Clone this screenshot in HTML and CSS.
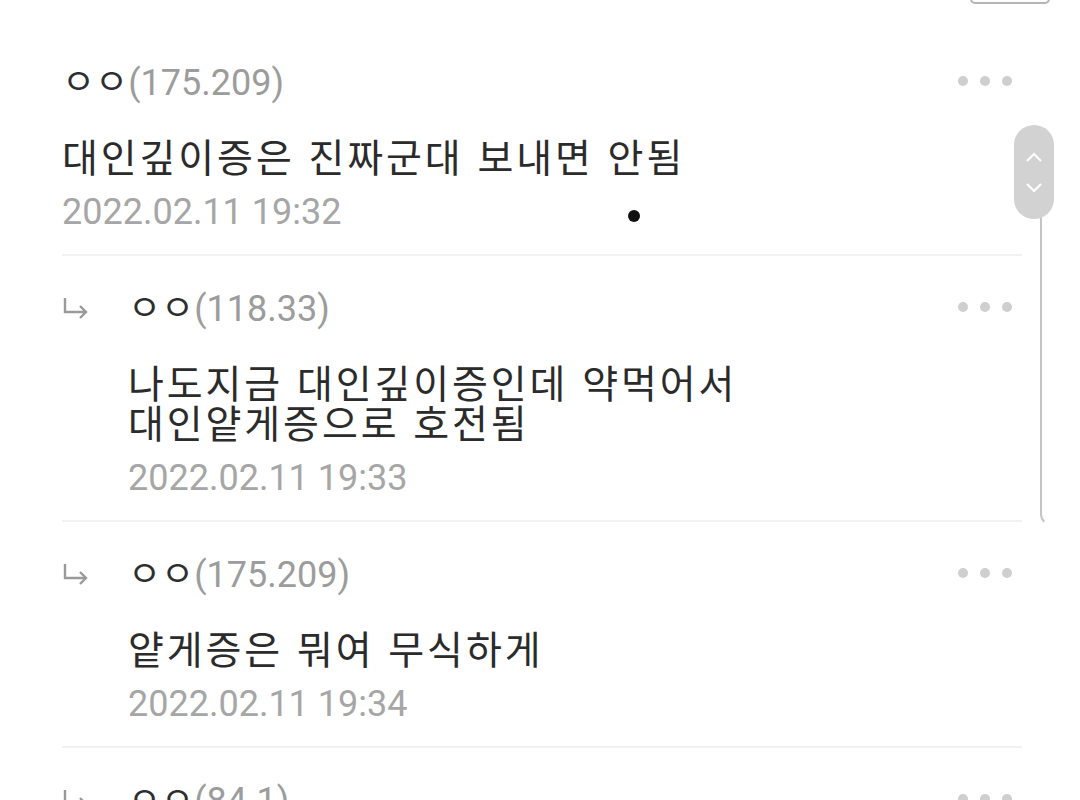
FILE: index.html
```html
<!DOCTYPE html>
<html lang="ko">
  <head>
    <meta charset="UTF-8" />
    <meta name="viewport" content="width=device-width, initial-scale=1.0" />
    <title>댓글</title>
    <link rel="stylesheet" href="styles.css">
  </head>
  <body>
    <div class="top-tab"></div>

    <div class="comment-list">
      <div class="comment">
        <div class="comment-head">
          <span class="nick">ㅇㅇ<span class="ip">(175.209)</span></span>
          <span class="more"><i></i><i></i><i></i></span>
        </div>
        <p class="comment-text">대인깊이증은 진짜군대 보내면 안됨</p>
        <div class="comment-date">2022.02.11 19:32</div>
      </div>

      <div class="comment reply">
        <svg class="reply-arrow" viewBox="0 0 28 22" width="28" height="22">
          <path d="M3 1 V15 H24 M18 9 L24 15 L18 21" fill="none" stroke="#9a9a9a" stroke-width="2.4" />
        </svg>
        <div class="reply-body">
          <div class="comment-head">
            <span class="nick">ㅇㅇ<span class="ip">(118.33)</span></span>
            <span class="more"><i></i><i></i><i></i></span>
          </div>
          <p class="comment-text">나도지금 대인깊이증인데 약먹어서<br />대인얕게증으로 호전됨</p>
          <div class="comment-date">2022.02.11 19:33</div>
        </div>
      </div>

      <div class="comment reply">
        <svg class="reply-arrow" viewBox="0 0 28 22" width="28" height="22">
          <path d="M3 1 V15 H24 M18 9 L24 15 L18 21" fill="none" stroke="#9a9a9a" stroke-width="2.4" />
        </svg>
        <div class="reply-body">
          <div class="comment-head">
            <span class="nick">ㅇㅇ<span class="ip">(175.209)</span></span>
            <span class="more"><i></i><i></i><i></i></span>
          </div>
          <p class="comment-text">얕게증은 뭐여 무식하게</p>
          <div class="comment-date">2022.02.11 19:34</div>
        </div>
      </div>

      <div class="comment reply">
        <svg class="reply-arrow" viewBox="0 0 28 22" width="28" height="22">
          <path d="M3 1 V15 H24 M18 9 L24 15 L18 21" fill="none" stroke="#9a9a9a" stroke-width="2.4" />
        </svg>
        <div class="reply-body">
          <div class="comment-head">
            <span class="nick">ㅇㅇ<span class="ip">(84.1)</span></span>
            <span class="more"><i></i><i></i><i></i></span>
          </div>
        </div>
      </div>
    </div>

    <!-- fast scroll handle -->
    <div class="scroll-track"></div>
    <div class="scroll-thumb">
      <svg viewBox="0 0 18 11" width="18" height="11"><path d="M2 9 L9 2 L16 9" fill="none" stroke="#fff" stroke-width="2" /></svg>
      <svg viewBox="0 0 18 11" width="18" height="11"><path d="M2 2 L9 9 L16 2" fill="none" stroke="#fff" stroke-width="2" /></svg>
    </div>

    <div class="touch-dot"></div>
  </body>
</html>
```

FILE: styles.css
```css
body {
  margin: 0;
  background: #fff;
  font-family: Roboto, "Noto Sans CJK KR", sans-serif;
  color: #333;
  overflow: hidden;
  height: 800px;
  position: relative;
}

.top-tab {
  position: absolute;
  top: -20px;
  left: 970px;
  width: 76px;
  height: 20px;
  border: 2px solid #b5b5b5;
  border-radius: 5px;
}

.comment-list {
  margin-left: 62px;
  width: 960px;
  padding-top: 30px;
}

.comment {
  padding: 31px 0 22px;
  border-bottom: 2px solid #f2f2f2;
}

.reply {
  display: flex;
}

.reply-arrow {
  flex: none;
  margin: 10px 38px 0 0;
}

.reply-body {
  flex: 1;
}

.comment-head {
  display: flex;
  justify-content: space-between;
  align-items: center;
  height: 40px;
}

.nick {
  font-family: "Noto Sans CJK KR", sans-serif;
  font-size: 36px;
  line-height: 40px;
  color: #2e2e2e;
}

.ip {
  font-family: Roboto, sans-serif;
  font-size: 36px;
  color: #9c9c9c;
}

.more {
  display: flex;
  gap: 12px;
  margin-right: 10px;
}

.more i {
  width: 10px;
  height: 10px;
  border-radius: 50%;
  background: #cfcfcf;
}

.comment-text {
  margin: 34px 0 0;
  font-family: "Noto Sans CJK KR", sans-serif;
  font-size: 39px;
  line-height: 40px;
  letter-spacing: 2.9px;
  color: #2b2b2b;
}

.comment-date {
  margin-top: 17px;
  font-size: 36px;
  line-height: 40px;
  color: #a6a6a6;
}

.scroll-track {
  position: absolute;
  left: 1040px;
  top: 200px;
  width: 10px;
  height: 324px;
  border-left: 2px solid #c4c4c4;
  border-bottom: 2px solid #c4c4c4;
  border-bottom-left-radius: 12px;
  border-bottom-color: transparent;
}

.scroll-thumb {
  position: absolute;
  left: 1014px;
  top: 125px;
  width: 40px;
  height: 94px;
  border-radius: 20px;
  background: #d2d2d2;
  display: flex;
  flex-direction: column;
  align-items: center;
  justify-content: center;
  gap: 19px;
}

.touch-dot {
  position: absolute;
  left: 628px;
  top: 210px;
  width: 12px;
  height: 12px;
  border-radius: 50%;
  background: #111;
}
```
